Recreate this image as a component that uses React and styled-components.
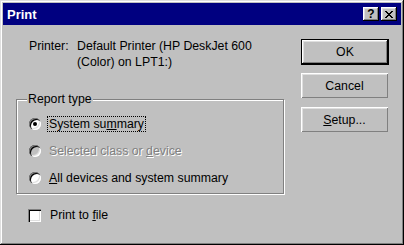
import React from "react";
import styled, { createGlobalStyle } from "styled-components";

const GlobalStyle = createGlobalStyle`
  html, body {
    margin: 0;
    padding: 0;
    background: #c0c0c0;
  }
  body {
    font-family: "Liberation Sans", Arial, sans-serif;
    font-size: 12.3px;
    color: #000;
  }
`;

const Window = styled.div`
  box-sizing: border-box;
  width: 404px;
  height: 245px;
  padding: 3px;
  background: #c0c0c0;
  display: flex;
  flex-direction: column;
  box-shadow: inset -1px -1px #000, inset 1px 1px #dfdfdf,
    inset -2px -2px #808080, inset 2px 2px #fff;
`;

const TitleBar = styled.div`
  height: 22px;
  flex: none;
  background: #000080;
  color: #fff;
  display: flex;
  align-items: center;
  justify-content: space-between;
  padding: 0 4px 0 4px;
`;

const Title = styled.span`
  font-weight: bold;
  font-size: 13px;
`;

const TitleButtons = styled.div`
  display: flex;
  gap: 2px;
`;

const TitleButton = styled.div`
  width: 16px;
  height: 14px;
  background: #c0c0c0;
  color: #000;
  display: flex;
  align-items: center;
  justify-content: center;
  font-weight: bold;
  font-size: 12px;
  line-height: 1;
  box-shadow: inset -1px -1px #000, inset 1px 1px #fff,
    inset -2px -2px #808080, inset 2px 2px #dfdfdf;
`;

const Body = styled.div`
  display: flex;
  gap: 17px;
  padding: 13px 12px 0 13px;
`;

const LeftColumn = styled.div`
  width: 268px;
  display: flex;
  flex-direction: column;
`;

const PrinterRow = styled.div`
  display: flex;
  margin-left: 13px;
  line-height: 16px;
`;

const PrinterLabel = styled.span`
  width: 48px;
  flex: none;
`;

const Group = styled.fieldset`
  margin: 21px 0 0 0;
  padding: 3px 0 2px 12px;
  border: 1px solid #808080;
  box-shadow: inset 1px 1px #fff, 1px 1px #fff;
`;

const Legend = styled.legend`
  padding: 0 1px;
  margin-left: -2px;
  line-height: 16px;
  background: #c0c0c0;
`;

const OptionRow = styled.label`
  height: 27px;
  display: flex;
  align-items: center;
  gap: 6px;
  color: ${(p) => (p.$disabled ? "#808080" : "#000")};
  text-shadow: ${(p) => (p.$disabled ? "1px 1px #fff" : "none")};
`;

const Radio = styled.span`
  position: relative;
  width: 12px;
  height: 12px;
  flex: none;
  border-radius: 50%;
  background: ${(p) => (p.$disabled ? "#c0c0c0" : "#fff")};
  box-shadow: inset 1px 1px #808080, inset 2px 2px #000,
    inset -1px -1px #fff, inset -2px -2px #dfdfdf;

  &::after {
    content: "";
    display: ${(p) => (p.$checked ? "block" : "none")};
    position: absolute;
    left: 4px;
    top: 4px;
    width: 4px;
    height: 4px;
    border-radius: 50%;
    background: #000;
  }
`;

const OptionText = styled.span`
  border: 1px dotted ${(p) => (p.$focused ? "#000" : "transparent")};
  padding: 0 1px;
  line-height: 14px;
`;

const CheckRow = styled.label`
  margin-top: 11px;
  height: 20px;
  display: flex;
  align-items: center;
  gap: 9px;
  padding-left: 12px;
`;

const CheckBox = styled.span`
  width: 13px;
  height: 13px;
  flex: none;
  background: #fff;
  box-shadow: inset 1px 1px #808080, inset 2px 2px #000,
    inset -1px -1px #fff, inset -2px -2px #dfdfdf;
`;

const RightColumn = styled.div`
  width: 88px;
  display: flex;
  flex-direction: column;
  gap: 8px;
  margin-top: 1px;
`;

const Button = styled.button`
  box-sizing: border-box;
  width: 88px;
  height: 26px;
  padding: 0;
  font: inherit;
  color: #000;
  background: #c0c0c0;
  border: 1px solid ${(p) => (p.$default ? "#000" : "transparent")};
  box-shadow: ${(p) =>
    p.$default
      ? "inset -1px -1px #000, inset 1px 1px #fff, inset -2px -2px #808080, inset 2px 2px #dfdfdf"
      : "0 0 0 1px #c0c0c0, 1px 1px #000, inset 1px 1px #fff, inset -1px -1px #808080, inset 2px 2px #dfdfdf"};
  ${(p) => !p.$default && "border: none; width: 87px; height: 25px; margin: 0 1px 1px 0;"}
`;

const XIcon = () => (
  <svg width="8" height="7" viewBox="0 0 8 7" shapeRendering="crispEdges">
    <path d="M0 0h2v1h1v1h2V1h1V0h2v1H7v1H6v1H5v1h1v1h1v1h1v1H6V6H5V5H3v1H2v1H0V6h1V5h1V4h1V3H2V2H1V1H0z" fill="#000" />
  </svg>
);

export default function App() {
  return (
    <>
      <GlobalStyle />
      <Window>
        <TitleBar>
          <Title>Print</Title>
          <TitleButtons>
            <TitleButton>?</TitleButton>
            <TitleButton>
              <XIcon />
            </TitleButton>
          </TitleButtons>
        </TitleBar>
        <Body>
          <LeftColumn>
            <PrinterRow>
              <PrinterLabel>Printer:</PrinterLabel>
              <span>
                Default Printer (HP DeskJet 600
                <br />
                (Color) on LPT1:)
              </span>
            </PrinterRow>
            <Group>
              <Legend>Report type</Legend>
              <OptionRow>
                <Radio $checked />
                <OptionText $focused>
                  System su<u>m</u>mary
                </OptionText>
              </OptionRow>
              <OptionRow $disabled>
                <Radio $disabled />
                <OptionText>
                  Selected class or <u>d</u>evice
                </OptionText>
              </OptionRow>
              <OptionRow>
                <Radio />
                <OptionText>
                  <u>A</u>ll devices and system summary
                </OptionText>
              </OptionRow>
            </Group>
            <CheckRow>
              <CheckBox />
              <span>
                Print to <u>f</u>ile
              </span>
            </CheckRow>
          </LeftColumn>
          <RightColumn>
            <Button $default>OK</Button>
            <Button>Cancel</Button>
            <Button>
              <u>S</u>etup...
            </Button>
          </RightColumn>
        </Body>
      </Window>
    </>
  );
}
